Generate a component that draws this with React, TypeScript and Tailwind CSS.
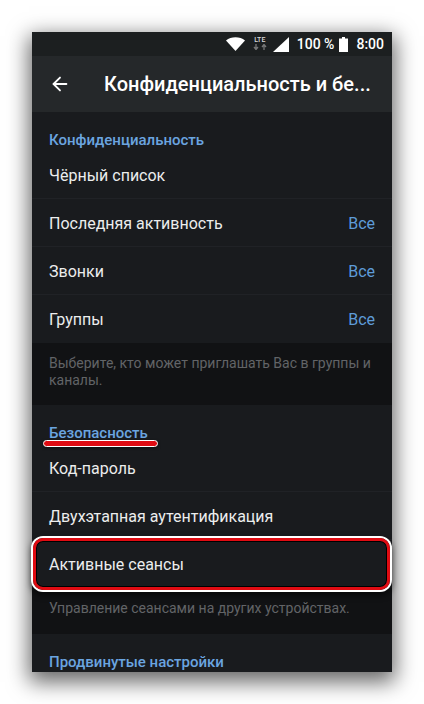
import { ArrowLeft } from 'lucide-react'

const FONT = "font-['Roboto','Noto_Sans',sans-serif]"

function SectionTitle({ children }: { children: string }) {
  return (
    <div className="h-[39px] px-[17px] pt-[18px] text-[15px] leading-[20px] font-medium text-[#6ba5e0]">
      {children}
    </div>
  )
}

function Row({ label, value, divider = true }: { label: string; value?: string; divider?: boolean }) {
  return (
    <div className={`h-12 flex items-center justify-between pt-[2px] pl-[17px] pr-[17px] text-[16px] text-[#eceded] ${divider ? 'border-b border-[#202226]' : ''}`}>
      <span>{label}</span>
      {value && <span className="text-[#5e9bd8]">{value}</span>}
    </div>
  )
}

function Hint({ children, className }: { children: string; className: string }) {
  return (
    <div className={`bg-[#111214] px-[17px] pt-[12px] text-[14px] leading-[17px] text-[#626467] ${className}`}>
      {children}
    </div>
  )
}

export default function App() {
  return (
    <div className={`relative w-[424px] h-[704px] bg-white pt-8 pl-8 overflow-hidden ${FONT}`}>
      <div className="w-[360px] h-[640px] bg-[#191b1e] overflow-hidden shadow-[0_7px_20px_3px_rgba(0,0,0,0.6)]">
        <div className="h-6 bg-[#1c1f20] flex items-center justify-end pr-2 text-white text-[14px] font-medium">
          <svg width="19" height="14" viewBox="0 0 19 14" className="mr-[8px]">
            <path d="M0 3.5 C5 -0.8 14 -0.8 19 3.5 L9.5 14 Z" fill="#fff" />
          </svg>
          <div className="flex flex-col items-center mr-[6px] -mt-[2px]">
            <span className="text-[7px] leading-[8px] text-[#d8d8d8]">LTE</span>
            <svg width="14" height="6" viewBox="0 0 14 6">
              <path d="M3 0v4M1 3l2 2.5L5 3M11 6V2M9 3l2-2.5L13 3" stroke="#777" strokeWidth="1.3" fill="none" />
            </svg>
          </div>
          <svg width="16" height="15" viewBox="0 0 16 15" className="mr-[8px]">
            <path d="M0 15 L16 0 V15 Z" fill="#fff" />
          </svg>
          <span className="mr-[5px]">100 %</span>
          <svg width="9" height="15" viewBox="0 0 9 15" className="mr-[8px]">
            <path d="M3 0h3v1.5h3V15H0V1.5h3Z" fill="#fff" />
          </svg>
          <span>8:00</span>
        </div>
        <div className="h-14 bg-[#25282a] flex items-center text-white">
          <ArrowLeft size={22} strokeWidth={2} className="ml-[17px]" />
          <span className="ml-[33px] text-[20px] font-medium whitespace-nowrap">Конфиденциальность и бе...</span>
        </div>

        <SectionTitle>Конфиденциальность</SectionTitle>
        <Row label="Чёрный список" />
        <Row label="Последняя активность" value="Все" />
        <Row label="Звонки" value="Все" />
        <Row label="Группы" value="Все" divider={false} />
        <Hint className="h-[62px]">Выберите, кто может приглашать Вас в группы и каналы.</Hint>

        <SectionTitle>Безопасность</SectionTitle>
        <Row label="Код-пароль" />
        <Row label="Двухэтапная аутентификация" />
        <Row label="Активные сеансы" divider={false} />
        <Hint className="h-[46px]">Управление сеансами на других устройствах.</Hint>

        <SectionTitle>Продвинутые настройки</SectionTitle>
      </div>

      {/* red annotations on top of the screenshot */}
      <div className="absolute left-[43px] top-[440px] w-[115px] h-[7px] rounded-full bg-[#e00b12] border border-white shadow-[0_1px_3px_rgba(0,0,0,0.5)]" />
      <div className="absolute left-[33px] top-[538px] w-[357px] h-[52px] rounded-[10px] border-[3px] border-[#e00b12] shadow-[0_0_0_2px_#fff,0_3px_6px_2px_rgba(0,0,0,0.6),inset_0_0_0_1px_#000]" />
    </div>
  )
}
